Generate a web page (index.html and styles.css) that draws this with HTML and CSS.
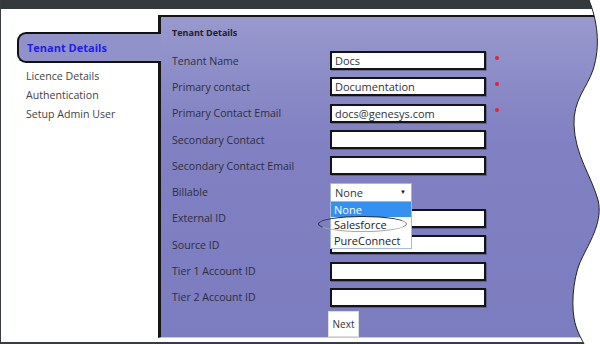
FILE: index.html
```html
<!DOCTYPE html>
<html lang="en">
<head>
    <meta charset="UTF-8">
    <meta name="viewport" content="width=device-width, initial-scale=1.0">
    <title>Tenant Details</title>
    <link rel="stylesheet" href="styles.css">
</head>
<body>
    <div class="screen">
        <div class="topbar"></div>
        <div class="main">
            <aside class="sidebar">
                <div class="tab">Tenant Details</div>
                <ul class="nav">
                    <li>Licence Details</li>
                    <li>Authentication</li>
                    <li>Setup Admin User</li>
                </ul>
            </aside>
            <section class="panel">
                <h2 class="panel-title">Tenant Details</h2>
                <div class="form">
                    <div class="row">
                        <label>Tenant Name</label>
                        <input class="field" type="text" value="Docs" readonly>
                        <span class="req"></span>
                    </div>
                    <div class="row">
                        <label>Primary contact</label>
                        <input class="field" type="text" value="Documentation" readonly>
                        <span class="req"></span>
                    </div>
                    <div class="row">
                        <label>Primary Contact Email</label>
                        <input class="field" type="text" value="docs@genesys.com" readonly>
                        <span class="req"></span>
                    </div>
                    <div class="row">
                        <label>Secondary Contact</label>
                        <input class="field" type="text" readonly>
                    </div>
                    <div class="row">
                        <label>Secondary Contact Email</label>
                        <input class="field" type="text" readonly>
                    </div>
                    <div class="row row-select">
                        <label>Billable</label>
                        <div class="select-wrap">
                            <div class="select">None <span class="arrow">&#9660;</span></div>
                            <ul class="options">
                                <li class="active">None</li>
                                <li>Salesforce</li>
                                <li>PureConnect</li>
                            </ul>
                            <span class="circle"></span>
                        </div>
                    </div>
                    <div class="row">
                        <label>External ID</label>
                        <input class="field" type="text" readonly>
                    </div>
                    <div class="row">
                        <label>Source ID</label>
                        <input class="field" type="text" readonly>
                    </div>
                    <div class="row">
                        <label>Tier 1 Account ID</label>
                        <input class="field" type="text" readonly>
                    </div>
                    <div class="row">
                        <label>Tier 2 Account ID</label>
                        <input class="field" type="text" readonly>
                    </div>
                    <div class="row">
                        <span></span>
                        <button class="next">Next</button>
                    </div>
                </div>
            </section>
        </div>
        <div class="bottom"></div>

        <svg class="torn" width="600" height="344" viewBox="0 0 600 344">
            <path d="M588,0 C596,20 600,45 592,70 C586,88 572,100 573,125 C574,155 590,175 597,200 C602,220 590,240 582,256 C573,272 570,300 573,318 C575,330 580,338 583,344 L600,344 L600,0 Z" fill="#fff"/>
            <path d="M588,0 C596,20 600,45 592,70 C586,88 572,100 573,125 C574,155 590,175 597,200 C602,220 590,240 582,256 C573,272 570,300 573,318 C575,330 580,338 583,344" fill="none" stroke="#222" stroke-width="1"/>
        </svg>
    </div>
</body>
</html>
```

FILE: styles.css
```css
body {
    margin: 0;
    background: #fff;
    font-family: "Open Sans", Arial, sans-serif;
    color: #333;
}

.screen {
    position: relative;
    width: 600px;
    height: 344px;
    overflow: hidden;
    border-left: 1px solid #3a3d40;
    box-sizing: border-box;
    background: #fff;
}

.topbar {
    height: 9px;
    background: #34393d;
    margin-bottom: 6px;
}

.main {
    display: flex;
    height: 323px;
}

.sidebar {
    width: 157px;
    flex-shrink: 0;
    padding-top: 17px;
    box-sizing: border-box;
}

.tab {
    position: relative;
    z-index: 1;
    height: 31px;
    margin-left: 16px;
    margin-right: -3px;
    box-sizing: border-box;
    border: 2px solid #111;
    border-right: none;
    border-radius: 9px 0 0 9px;
    background: #9292ca;
    padding-left: 8px;
    display: flex;
    align-items: center;
    font-size: 11px;
    font-weight: bold;
    color: #1e1ee8;
}

.nav {
    list-style: none;
    margin: 4px 0 0 0;
    padding: 0 0 0 25px;
    font-size: 10.6px;
    color: #444;
}

.nav li {
    height: 19px;
    line-height: 19px;
}

.panel {
    flex: 1;
    border-top: 2px solid #151515;
    border-left: 3px solid #151515;
    border-bottom: 1px solid #c6c6e6;
    background: linear-gradient(to bottom, #9999ce 0%, #8a8ac7 22%, #8080c3 40%, #7c7cc0 100%);
    padding-left: 11px;
}

.panel-title {
    margin: 0;
    padding: 8px 0 6.5px 0;
    line-height: 16px;
    font-size: 9px;
    font-weight: bold;
    color: #222;
}

.row {
    display: grid;
    grid-template-columns: 158px 156px auto;
    align-items: center;
    height: 26.3px;
}

.row label {
    font-size: 10.6px;
    color: #2f2f3a;
}

.field {
    width: 156px;
    height: 19px;
    box-sizing: border-box;
    border: 2px solid #141414;
    box-shadow: 1px 1px 0 rgba(0, 0, 0, 0.25);
    background: #fff;
    padding: 0 3px;
    margin: 0;
    font-family: "Open Sans", Arial, sans-serif;
    font-size: 11px;
    color: #333;
    outline: none;
}

.req {
    width: 4px;
    height: 4px;
    border-radius: 50%;
    background: #e8222e;
    margin-left: 9px;
    margin-bottom: 6px;
}

.select-wrap {
    position: relative;
    width: 82px;
    z-index: 2;
}

.select {
    height: 19px;
    box-sizing: border-box;
    border: 1px solid #9fb8da;
    background: #fff;
    padding-left: 4px;
    font-size: 11px;
    line-height: 17px;
    color: #333;
    display: flex;
    justify-content: space-between;
}

.arrow {
    font-size: 6px;
    color: #111;
    padding-right: 5px;
}

.options {
    position: absolute;
    top: 19px;
    left: 0;
    width: 82px;
    box-sizing: border-box;
    margin: 0;
    padding: 0;
    list-style: none;
    background: #fff;
    border: 1px solid #a5bcdc;
    border-top: none;
    font-size: 11px;
    color: #222;
}

.options li {
    height: 15.5px;
    line-height: 15.5px;
    padding-left: 3px;
}

.options li.active {
    background: #3590f2;
    color: #fff;
}

.circle {
    position: absolute;
    left: -12px;
    top: 33px;
    width: 89px;
    height: 16px;
    box-sizing: border-box;
    border: 1px solid #333;
    border-color: #2a2a2a #777 #aaa #2a2a2a;
    border-radius: 50%;
}

.next {
    width: 31px;
    height: 26px;
    margin-left: -2px;
    border: 1px solid #ddd;
    background: #fff;
    font-family: "Open Sans", Arial, sans-serif;
    font-size: 10px;
    color: #333;
    padding: 0;
}

.bottom {
    margin-top: 4px;
    height: 2px;
    background: #3a3d40;
}

.torn {
    position: absolute;
    top: 0;
    left: 0;
    pointer-events: none;
}
```
